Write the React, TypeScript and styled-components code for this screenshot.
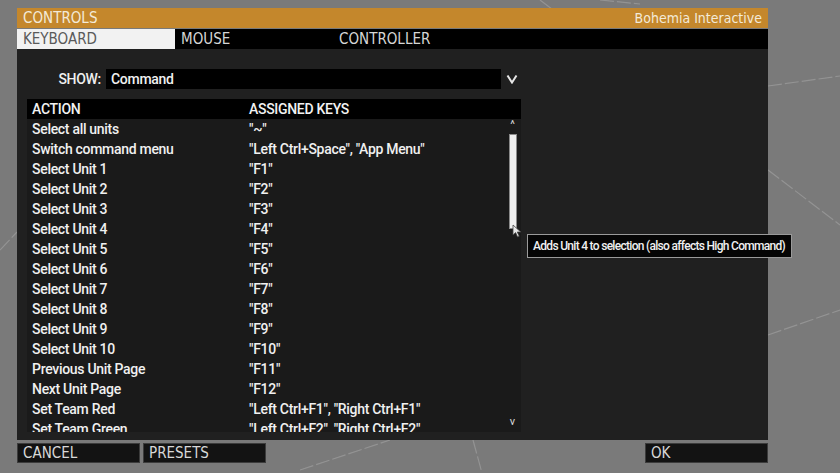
import styled, { createGlobalStyle } from 'styled-components';

const GlobalStyle = createGlobalStyle`
  html, body {
    margin: 0;
    padding: 0;
  }
  body {
    background: #7a7a7a;
    font-family: Roboto, "Liberation Sans", sans-serif;
    overflow: hidden;
  }
`;

const bindings: [string, string][] = [
  ['Select all units', '"~"'],
  ['Switch command menu', '"Left Ctrl+Space", "App Menu"'],
  ['Select Unit 1', '"F1"'],
  ['Select Unit 2', '"F2"'],
  ['Select Unit 3', '"F3"'],
  ['Select Unit 4', '"F4"'],
  ['Select Unit 5', '"F5"'],
  ['Select Unit 6', '"F6"'],
  ['Select Unit 7', '"F7"'],
  ['Select Unit 8', '"F8"'],
  ['Select Unit 9', '"F9"'],
  ['Select Unit 10', '"F10"'],
  ['Previous Unit Page', '"F11"'],
  ['Next Unit Page', '"F12"'],
  ['Set Team Red', '"Left Ctrl+F1", "Right Ctrl+F1"'],
  ['Set Team Green', '"Left Ctrl+F2", "Right Ctrl+F2"'],
];

const tabs = ['KEYBOARD', 'MOUSE', 'CONTROLLER'];

const App = () => {
  return (
    <>
      <GlobalStyle />
      <Page>
        <Backdrop width="840" height="473" viewBox="0 0 840 473">
          <line x1="540" y1="0" x2="556" y2="12" />
          <line x1="600" y1="0" x2="640" y2="4" />
          <line x1="768" y1="335" x2="840" y2="310" />
          <line x1="768" y1="86" x2="840" y2="76" />
          <line x1="768" y1="170" x2="840" y2="225" />
          <line x1="300" y1="470" x2="390" y2="440" />
          <line x1="473" y1="440" x2="482" y2="473" />
          <line x1="0" y1="250" x2="17" y2="232" />
        </Backdrop>

        <Window>
          <TitleBar>
            <span>CONTROLS</span>
            <Brand>Bohemia Interactive</Brand>
          </TitleBar>

          <TabBar>
            {tabs.map((t, i) => (
              <Tab key={t} $active={i === 0}>{t}</Tab>
            ))}
          </TabBar>

          <Panel>
            <ShowRow>
              <ShowLabel>SHOW:</ShowLabel>
              <ShowBox>Command</ShowBox>
              <Chevron width="12" height="10" viewBox="0 0 12 10">
                <path d="M1.5 1.5 L6 8.5 L10.5 1.5" />
              </Chevron>
            </ShowRow>

            <Table>
              <HeaderRow>
                <ActionCell>ACTION</ActionCell>
                <KeyCell>ASSIGNED KEYS</KeyCell>
              </HeaderRow>
              <List>
                <Rows>
                  {bindings.map(([action, keys]) => (
                    <Row key={action}>
                      <ActionCell>{action}</ActionCell>
                      <KeyCell>{keys}</KeyCell>
                    </Row>
                  ))}
                </Rows>
                <ScrollTrack>
                  <ScrollArrow>^</ScrollArrow>
                  <Thumb />
                  <ScrollArrow $down>v</ScrollArrow>
                </ScrollTrack>
              </List>
            </Table>
          </Panel>

          <Footer>
            <FooterButton>CANCEL</FooterButton>
            <FooterButton>PRESETS</FooterButton>
            <Spacer />
            <FooterButton>OK</FooterButton>
          </Footer>
        </Window>

        <Cursor width="10" height="14" viewBox="0 0 10 14">
          <path d="M1 1 L1 11 L3.6 8.6 L5.6 13 L7.2 12.2 L5.3 8 L8.8 8 Z" />
        </Cursor>
        <Tooltip>Adds Unit 4 to selection (also affects High Command)</Tooltip>
      </Page>
    </>
  );
};

const Page = styled.div`
  position: relative;
  width: 840px;
  height: 473px;
  box-sizing: border-box;
  padding: 8px 0 0 17px;
`;

const Backdrop = styled.svg`
  position: absolute;
  left: 0;
  top: 0;
  stroke: #9a9a9a;
  stroke-width: 1.2;
  stroke-dasharray: 14 3;
  opacity: 0.8;
`;

const Window = styled.div`
  position: relative;
  width: 751px;
  display: flex;
  flex-direction: column;
`;

const TitleBar = styled.div`
  height: 20px;
  background: #c4872c;
  color: #f3ead8;
  display: flex;
  align-items: center;
  justify-content: space-between;
  padding: 0 6px;
  font-family: "DejaVu Sans Condensed", "DejaVu Sans", sans-serif;
  font-size: 15px;
  line-height: 20px;
`;

const Brand = styled.span`
  font-size: 14px;
`;

const TabBar = styled.div`
  margin-top: 1px;
  height: 20px;
  background: #000;
  display: flex;
`;

const Tab = styled.div<{ $active?: boolean }>`
  width: 158px;
  box-sizing: border-box;
  padding-left: 6px;
  background: ${({ $active }) => ($active ? '#f2f2f2' : 'transparent')};
  color: ${({ $active }) => ($active ? '#5a5a5a' : '#d6d6d6')};
  font-family: "DejaVu Sans Condensed", "DejaVu Sans", sans-serif;
  font-size: 15px;
  line-height: 20px;
`;

const Panel = styled.div`
  height: 391px;
  background: #202020;
  box-sizing: border-box;
  padding: 20px 0 0 10px;
`;

const ShowRow = styled.div`
  display: flex;
  align-items: center;
  height: 20px;
`;

const ShowLabel = styled.div`
  width: 79px;
  box-sizing: border-box;
  padding-right: 5px;
  text-align: right;
  color: #efefef;
  font-size: 14px;
  font-weight: 500;
  letter-spacing: -0.3px;
`;

const ShowBox = styled.div`
  width: 395px;
  height: 20px;
  background: #000;
  box-sizing: border-box;
  padding-left: 5px;
  color: #f0f0f0;
  font-size: 14px;
  font-weight: 500;
  letter-spacing: -0.3px;
  line-height: 20px;
`;

const Chevron = styled.svg`
  margin-left: 5px;
  fill: none;
  stroke: #e6e6e6;
  stroke-width: 2;
`;

const Table = styled.div`
  margin-top: 10px;
  width: 494px;
`;

const HeaderRow = styled.div`
  display: flex;
  height: 20px;
  background: #000;
  color: #f2f2f2;
  font-size: 14px;
  font-weight: 500;
  letter-spacing: -0.3px;
  line-height: 20px;
`;

const List = styled.div`
  display: flex;
  height: 313px;
  background: #1a1a1a;
  overflow: hidden;
`;

const Rows = styled.div`
  flex: 1;
`;

const Row = styled.div`
  display: flex;
  height: 20px;
  color: #f0f0f0;
  font-size: 14px;
  font-weight: 500;
  letter-spacing: -0.3px;
  line-height: 20px;
  white-space: nowrap;
`;

const ActionCell = styled.div`
  width: 222px;
  box-sizing: border-box;
  padding-left: 5px;
`;

const KeyCell = styled.div`
  flex: 1;
`;

const ScrollTrack = styled.div`
  width: 11px;
  margin-right: 3px;
  display: flex;
  flex-direction: column;
  align-items: center;
`;

const ScrollArrow = styled.div<{ $down?: boolean }>`
  color: #d8d8d8;
  font-size: 11px;
  line-height: 10px;
  height: 10px;
  margin-top: ${({ $down }) => ($down ? 'auto' : '1px')};
  margin-bottom: ${({ $down }) => ($down ? '5px' : '0')};
`;

const Thumb = styled.div`
  margin-top: 4px;
  width: 6px;
  height: 93px;
  background: #eeeeee;
  border: 1px solid #8a8a8a;
`;

const Footer = styled.div`
  display: flex;
  gap: 3px;
  margin-top: 3px;
`;

const Spacer = styled.div`
  flex: 1;
`;

const FooterButton = styled.div`
  width: 123px;
  height: 20px;
  box-sizing: border-box;
  background: #131313;
  border: 1px solid #3c3c3c;
  padding-left: 5px;
  color: #d8d8d8;
  font-family: "DejaVu Sans Condensed", "DejaVu Sans", sans-serif;
  font-size: 15px;
  line-height: 18px;
`;

const Cursor = styled.svg`
  position: absolute;
  left: 512px;
  top: 224px;
  fill: #e8e8e8;
  stroke: #444;
  stroke-width: 0.8;
`;

const Tooltip = styled.div`
  position: absolute;
  left: 527px;
  top: 234px;
  width: 265px;
  height: 24px;
  box-sizing: border-box;
  background: #050505;
  border: 1px solid #9a9a9a;
  padding-left: 5px;
  color: #f0f0f0;
  font-size: 12px;
  font-weight: 500;
  letter-spacing: -0.7px;
  line-height: 22px;
  white-space: nowrap;
  overflow: hidden;
`;

export default App;
